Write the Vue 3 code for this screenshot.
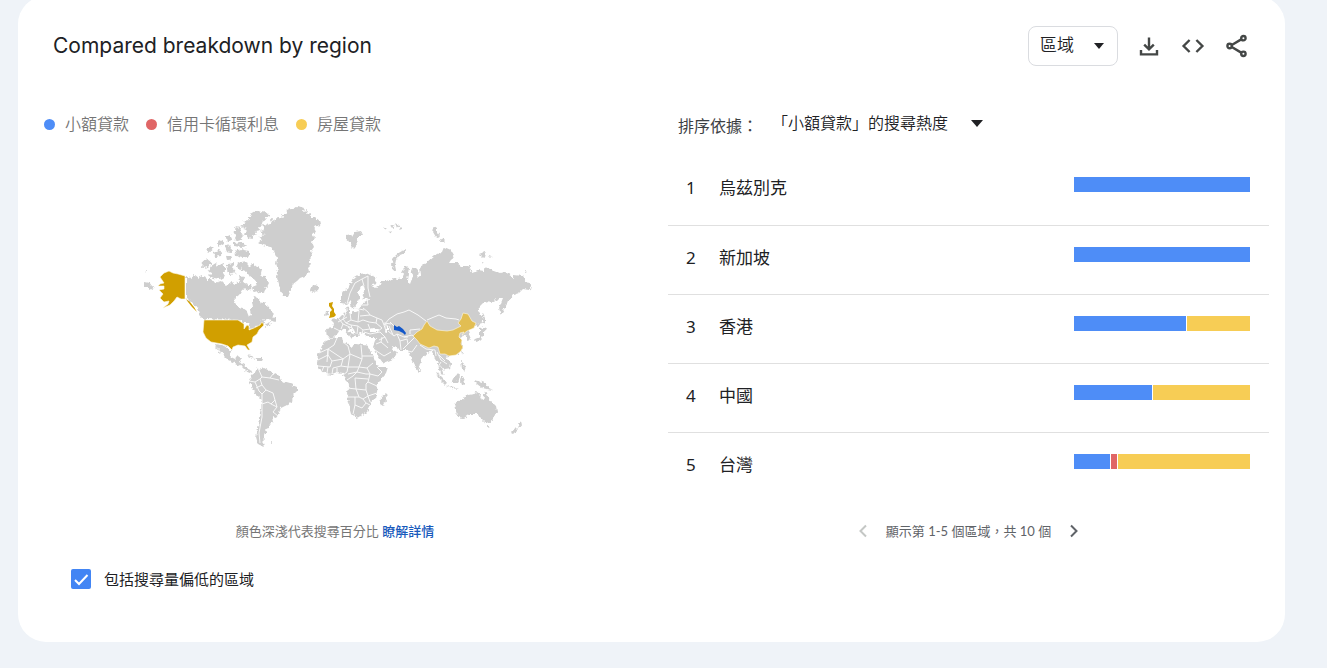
<script setup>
import { ref } from 'vue'

const blue = '#4e8df7'
const red = '#e06666'
const yellow = '#f7cd55'

const terms = [
  { name: '小額貸款', color: blue },
  { name: '信用卡循環利息', color: red },
  { name: '房屋貸款', color: yellow }
]

const regions = [
  { name: '烏茲別克', parts: [{ v: 100, color: blue }] },
  { name: '新加坡', parts: [{ v: 100, color: blue }] },
  { name: '香港', parts: [{ v: 64, color: blue }, { v: 36, color: yellow }] },
  { name: '中國', parts: [{ v: 45, color: blue }, { v: 56, color: yellow }] },
  { name: '台灣', parts: [{ v: 36, color: blue }, { v: 6, color: red }, { v: 132, color: yellow }] }
]

const scope = ref('區域')
const sort = ref('「小額貸款」的搜尋熱度')
const lowVolume = ref(true)

const land = [
  // Greenland
  'M290 208L294 209L298 206L304 208L303 211L308 210L306 214L312 213L310 217L315 217L321 222L318 226L314 227L316 231L312 234L315 238L312 242L314 247L311 251L312 256L309 259L311 264L308 267L309 272L305 276L300 278L297 281L293 284L290 290L288 297L284 297L281 291L279 284L277 277L278 271L276 264L277 258L274 251L270 247L263 245L258 242L263 240L259 237L265 235L260 231L265 230L263 226L270 223L272 219L276 221L278 217L284 218L281 214L288 214L286 210Z',
  // Ellesmere and neighbouring islands
  'M255 211L260 213L264 211L269 215L265 218L268 219L262 222L264 225L258 227L260 231L255 232L256 236L251 235L253 239L247 238L248 234L243 235L247 231L242 230L247 228L241 226L246 223L242 221L249 220L247 217L253 217L250 214Z',
  'M236 227L241 228L240 232L243 236L239 241L235 239L237 235L233 233Z',
  'M226 237L230 235L232 239L227 242Z M218 242L222 240L224 243L219 246Z M206 250L211 246L214 248L208 253Z M213 252L218 250L222 251L221 256L215 257Z M224 247L229 245L232 248L231 253L226 252Z M234 243L240 242L248 245L242 247L234 246Z M226 256L231 255L232 259L227 260Z',
  'M235 251L241 249L249 251L249 256L243 258L236 256Z',
  'M203 261L208 259L212 262L208 267L202 268Z M211 266L216 263L218 266L223 264L226 269L223 273L225 276L220 279L214 278L209 276L212 273L208 271Z M228 264L234 263L233 269L236 273L230 275L227 270Z M238 262L243 264L240 270L236 267Z',
  // Baffin Island
  'M241 263L247 262L249 267L253 263L258 267L262 270L261 274L266 278L269 283L267 287L264 285L266 291L262 294L258 291L254 292L252 287L257 285L255 280L250 277L247 272L242 271Z M245 285L250 285L252 289L246 290Z',
  // Canadian mainland
  'M186 276L190 278L195 275L199 278L203 276L207 279L212 279L215 283L221 281L225 285L229 284L231 281L236 284L240 281L239 276L244 277L243 282L248 284L246 288L242 290L239 295L235 298L234 303L238 307L243 308L247 311L249 316L251 315L250 311L253 307L252 301L254 297L259 299L261 304L265 301L267 306L270 310L274 314L272 318L266 319L260 321L264 321L263 324L257 326L251 330L248 329L249 325L244 323L240 320L203 319L199 315L197 308L192 302L186 298Z M266 324L271 322L270 325L265 327Z M272 317L276 318L276 322L271 321Z',
  // Mexico, Central America and the Caribbean
  'M215 344L222 345L228 348L231 352L231 357L235 359L238 356L241 358L239 362L245 365L247 369L252 371L251 373L246 371L241 366L235 363L228 360L224 356L220 350L217 347L221 354L218 351Z M246 355L252 356L256 359L250 357Z M257 359L262 359L261 361L257 361Z M169 357L170 357L170 358L169 358Z',
  // South America
  'M253 374L257 367L259 370L264 368L270 371L275 374L280 377L283 382L290 384L297 387L297 391L293 395L292 402L287 405L281 408L279 414L276 418L273 417L274 422L269 424L269 428L265 429L267 432L264 435L265 438L262 441L264 447L258 444L256 437L258 429L259 418L261 408L261 399L256 394L252 387L249 382L250 378Z M271 442L273 442L272 444Z',
  // Africa and Madagascar
  'M325 341L330 339L337 337L342 337L343 342L348 344L352 347L356 344L363 345L369 346L371 353L375 361L379 367L388 367L386 373L381 379L378 384L377 391L377 396L371 401L370 406L367 411L362 416L356 418L352 414L349 403L347 394L349 385L345 379L343 374L337 373L332 375L326 374L321 370L317 364L318 354L322 348Z M386 393L387 398L383 406L380 404L381 397Z',
  // Iceland, Ireland and Svalbard
  'M311 287L315 285L320 287L318 291L313 292L310 290Z M326 311L329 311L328 315L325 316Z M346 235L350 234L352 237L355 232L361 231L363 235L357 238L358 243L353 249L351 244L349 240L346 239Z',
  // Arctic archipelagos
  'M383 229L386 227L387 231Z M390 227L393 225L394 228Z M395 223L400 226L397 228Z M388 232L392 231L391 234Z M399 229L402 228L401 231Z M407 250L404 254L399 256L396 260L395 265L396 270L393 270L391 265L393 259L397 254L402 251Z M434 226L437 228L437 232L440 236L436 237L433 232Z M441 238L445 240L443 242L440 242Z M479 254L484 252L487 255L483 258Z M488 256L493 257L490 258Z M483 262L485 262L484 264Z M525 270L527 271L525 272Z M144 282L149 283L152 287L154 288L150 290L147 287L144 287Z M145 270L147 270L146 272Z',
  // Scandinavia, mainland Europe and Asia
  'M341 294L345 289L348 288L351 282L355 277L360 274L366 273L372 276L377 279L376 284L371 285L376 288L381 285L380 281L386 281L393 278L398 279L402 278L404 274L402 270L406 266L409 267L408 274L407 281L410 284L413 276L411 270L415 267L419 271L417 278L421 275L420 267L427 262L434 256L442 252L444 247L451 250L454 255L449 263L457 263L461 266L469 266L472 272L478 270L484 271L484 267L491 270L499 273L507 272L514 278L514 275L523 276L527 282L532 288L529 290L523 289L519 293L513 295L507 304L501 315L499 308L503 298L498 298L494 302L486 301L480 307L478 311L482 315L483 320L478 327L475 325L468 331L471 338L468 341L465 335L459 338L463 347L458 353L450 356L445 357L451 363L450 369L444 370L440 365L444 375L440 374L438 364L435 359L433 351L427 353L421 360L418 371L413 361L408 350L399 350L392 346L391 349L397 352L393 359L383 363L378 356L373 346L376 338L369 338L363 333L359 332L360 337L356 337L352 329L348 328L349 332L355 335L352 339L345 330L340 329L338 333L333 338L327 337L326 329L333 328L334 323L331 320L338 319L343 314L347 313L346 307L350 309L350 313L359 311L362 304L366 301L370 298L364 299L362 295L365 290L364 286L361 287L358 293L360 298L356 306L352 308L350 300L346 304L341 303Z',
  // Sumatra, Java, Borneo, Sulawesi and the Philippines
  'M436 373L440 375L446 381L445 385L440 380Z M447 386L454 387L458 389L451 388Z M451 380L455 377L458 373L460 377L457 383L452 383Z M461 377L464 377L463 380L465 385L461 384L460 381Z M461 361L464 362L463 366L466 368L465 372L462 368Z M473 380L479 381L485 383L489 388L493 390L487 389L482 388L477 384Z',
  // Japan, Sri Lanka and Taiwan
  'M483 314L485 318L485 324L483 321Z M480 329L485 327L487 330L483 332L483 337L480 340L474 342L475 339L480 337Z M419 368L421 371L419 373Z M461 351L463 352L462 355Z',
  // Australia, Tasmania and New Zealand
  'M455 403L460 400L464 399L468 394L474 393L477 392L480 394L479 398L483 400L485 391L488 397L491 401L496 406L497 411L494 418L490 423L485 422L482 419L477 414L470 414L464 418L457 417L456 411Z M488 426L491 426L489 430Z M520 421L523 423L519 428L518 425Z M516 427L518 429L513 434L511 433Z'
]

const borders = [
  // South America
  'M249 381L255 382L260 379L262 385L266 390L273 393L275 400L271 404L268 402L262 404L262 394M255 382L259 391L262 394M258 368L262 377L270 378L273 374M270 378L279 380M262 377L260 379M262 385L256 388M275 400L277 407L273 412L278 416M262 404L262 417L259 433L260 443M266 390L262 394M271 404L277 407',
  // Africa
  'M337 338L334 345L328 349L319 353M328 349L328 355L318 360M328 349L343 359L350 354L348 346L343 342M361 345L362 356L373 356M350 354L362 359L362 356M318 366L330 367L332 361L328 355M332 361L343 359L341 366L333 368L332 374M341 366L348 367L347 372L343 375M350 354L348 367M362 359L359 367L367 368L373 363M348 367L359 367L357 372L348 374M367 368L370 374L378 376L382 372L377 367M357 372L366 374L370 374L368 382L377 386M347 380L353 376L357 372M347 388L356 389L355 378L368 379M356 389L366 390L366 384L368 382M347 397L359 397L356 389M366 390L368 396L377 393M359 397L363 399L368 396L370 402M353 414L355 405L362 408L366 403L370 405M355 397L355 405M363 399L366 403M322 371L324 366M327 373L328 367M337 373L337 368M327 362L328 349',
  // Europe
  'M347 304L350 293L355 283L362 279L364 286M362 279L368 276L368 288L370 297M334 328L340 331M339 319L343 324L341 329M346 313L343 319L346 323L351 325L358 326M350 313L351 320L346 323M351 320L358 322L359 311M358 322L363 320L369 322L376 323L377 318L370 315L360 316M363 308L368 312L370 315M360 305L368 305L367 299M351 325L353 331M358 326L357 334M358 326L363 330L370 329L368 324M363 330L362 334M343 324L352 328M347 317L338 322M376 323L382 328L377 332M354 308L364 310',
  // Western and central Asia
  'M364 332L370 334L380 332L385 337L379 340M385 337L388 343M388 331L394 336L397 334L404 337L408 337M382 337L381 342L376 344M381 342L388 348M375 350L384 356L391 352M397 334L400 341L401 350M400 341L407 339L408 344L403 349M408 344L415 337M404 337L412 335L415 337M386 331L384 325L389 319L397 314L404 312L409 310L418 315L426 321M390 322L395 327M389 326L393 335M427 320L434 317L439 315L446 318L456 319L459 320M410 334L410 330L420 329M420 345L426 349L435 350L436 356M417 345L412 352L408 351M437 352L441 360L447 364M439 355L445 361M441 362L438 367M384 323L391 324M377 318L382 320L384 325'
]

const lakes = 'M385 323L388 326L388 333L385 332L386 328ZM244 323L248 323L250 326L247 326L247 329L245 329ZM369 329L374 328L380 330L377 332L369 332Z'
const usa = 'M204 320L238 320L244 324L244 329L247 325L249 326L249 330L254 328L260 325L262 322L264 325L259 330L257 334L253 337L252 342L247 345L250 350L248 350L245 346L238 345L233 347L232 350L228 346L222 344L211 342L206 338L203 332Z'
const alaska = 'M160 277L164 273L169 271L173 273L178 274L185 276L185 299L181 299L177 297L174 301L170 305L163 308L168 304L169 301L164 302L160 298L163 294L159 290L164 289L164 286L158 286L160 284L164 283L162 280Z'
const panhandle = 'M186 299L190 302L194 307L197 312L192 307L188 302Z'
const china = 'M413 336L417 332L422 329L424 325L427 321L430 326L437 330L447 331L453 330L461 326L458 323L461 319L463 313L468 314L472 321L476 323L474 328L467 331L462 335L464 332L460 333L459 337L462 340L461 344L463 347L461 351L456 355L449 356L445 354L440 354L438 347L434 346L429 348L420 344L417 340Z'
const britain = 'M329 303L333 302L332 306L334 309L334 312L336 315L334 317L329 318L330 315L330 312L332 310L329 306Z'
const uzbek = 'M394 325L397 327L399 326L403 329L406 333L405 335L403 333L399 331L394 330Z'
</script>

<template>
  <main class="card">
    <header class="head">
      <h1>Compared breakdown by region</h1>
      <div class="tools">
        <label class="picker boxed">
          <select v-model="scope" aria-label="區域">
            <option>區域</option>
          </select>
          <svg class="caret" width="10" height="6" viewBox="0 0 10 6" aria-hidden="true"><path d="M0 0H10L5 6Z" /></svg>
        </label>
        <button type="button" class="icon" aria-label="CSV">
          <svg width="24" height="24" viewBox="0 0 24 24"><path d="M12 3.5V15M7.2 10.6L12 15.4L16.8 10.6M4 16V20.4H20V16" /></svg>
        </button>
        <button type="button" class="icon" aria-label="Embed">
          <svg width="24" height="24" viewBox="0 0 24 24"><path d="M8.6 6L2.6 12L8.6 18M15.4 6L21.4 12L15.4 18" /></svg>
        </button>
        <button type="button" class="icon" aria-label="Share">
          <svg width="24" height="24" viewBox="0 0 24 24"><path d="M6.8 11L16.2 5.4M6.8 13L16.2 18.6" /><circle cx="4.6" cy="12" r="2.2" /><circle cx="18.4" cy="4.2" r="2.2" /><circle cx="18.4" cy="19.8" r="2.2" /></svg>
        </button>
      </div>
    </header>

    <div class="columns">
      <section class="left">
        <ul class="legend">
          <li v-for="t in terms" :key="t.name"><i :style="{ background: t.color }"></i>{{ t.name }}</li>
        </ul>
        <svg class="map" viewBox="135 200 400 250" role="img" aria-label="世界地圖">
          <defs>
            <filter id="coast" x="0" y="0" width="1" height="1">
              <feTurbulence type="fractalNoise" baseFrequency="0.28" numOctaves="2" seed="4" />
              <feDisplacementMap in="SourceGraphic" scale="5" xChannelSelector="R" yChannelSelector="G" />
            </filter>
          </defs>
          <g filter="url(#coast)">
            <path v-for="(d, i) in land" :key="'l' + i" class="land" :d="d" />
            <path class="water" :d="lakes" />
          </g>
          <path v-for="(d, i) in borders" :key="'b' + i" class="border" :d="d" />
          <path class="usa" :d="usa" />
          <path class="usa" :d="alaska" />
          <path class="islets" :d="panhandle" />
          <path class="islets" :d="britain" />
          <path class="china" :d="china" />
          <path class="uzbek" :d="uzbek" />
        </svg>
        <p class="caption">顏色深淺代表搜尋百分比 <a href="#">瞭解詳情</a></p>
        <label class="check">
          <input v-model="lowVolume" type="checkbox" />
          <svg width="20" height="20" viewBox="0 0 20 20" aria-hidden="true"><path d="M4 11L8 15L16.5 6" /></svg>
          <span>包括搜尋量偏低的區域</span>
        </label>
      </section>

      <section class="right">
        <div class="sort">
          <label for="sort">排序依據：</label>
          <div class="picker">
            <select id="sort" v-model="sort">
              <option>「小額貸款」的搜尋熱度</option>
            </select>
            <svg class="caret" width="12" height="7" viewBox="0 0 12 7" aria-hidden="true"><path d="M0 0H12L6 7Z" /></svg>
          </div>
        </div>
        <table>
          <tbody>
            <tr v-for="(r, i) in regions" :key="r.name">
              <td class="rank">{{ i + 1 }}</td>
              <td class="name">{{ r.name }}</td>
              <td class="share">
                <div class="bar">
                  <span v-for="(p, k) in r.parts" :key="k" :style="{ flexGrow: p.v, background: p.color }"></span>
                </div>
              </td>
            </tr>
          </tbody>
        </table>
        <nav class="pager">
          <button type="button" disabled aria-label="上一頁">
            <svg width="10" height="14" viewBox="0 0 10 14"><path d="M8 1.5L2.5 7L8 12.5" /></svg>
          </button>
          <span>顯示第 1-5 個區域，共 10 個</span>
          <button type="button" aria-label="下一頁">
            <svg width="10" height="14" viewBox="0 0 10 14"><path d="M2 1.5L7.5 7L2 12.5" /></svg>
          </button>
        </nav>
      </section>
    </div>
  </main>
</template>

<style>
body {
  margin: 0;
  background: #eff3f8;
  overflow: hidden;
}
</style>

<style scoped>
.card {
  box-sizing: border-box;
  margin: -4px 42px 25px 18px;
  padding: 4px 16px 52px 0;
  background: #fff;
  border-radius: 28px;
  font-family: Lato, "Noto Sans CJK TC", sans-serif;
  color: #202124;
}
.head {
  display: flex;
  align-items: center;
  justify-content: space-between;
  height: 92px;
  padding: 0 20px 0 35px;
}
h1 {
  margin: 0;
  font-family: Inter, sans-serif;
  font-size: 21px;
  font-weight: 400;
  line-height: 28px;
}
.tools {
  display: flex;
  align-items: center;
}
button {
  padding: 0;
  border: 0;
  background: none;
  cursor: pointer;
}
.icon {
  display: grid;
  place-items: center;
  width: 24px;
  height: 24px;
  margin-left: 20px;
}
.icon:first-of-type {
  margin-left: 19px;
}
.icon svg {
  fill: none;
  stroke: #444746;
  stroke-width: 2.4;
}
.picker {
  display: grid;
  align-items: center;
}
.picker > * {
  grid-area: 1 / 1;
}
.picker select {
  appearance: none;
  border: 0;
  background: none;
  color: #202124;
  font-family: inherit;
  font-size: 17px;
  font-weight: 350;
  line-height: 24px;
}
.caret {
  justify-self: end;
  fill: #202124;
  pointer-events: none;
}
.boxed {
  box-sizing: border-box;
  width: 90px;
  height: 40px;
  border: 1px solid #dadce0;
  border-radius: 8px;
}
.boxed select {
  width: 100%;
  height: 38px;
  padding: 0 0 3px 11px;
}
.boxed .caret {
  margin-right: 13px;
}
.columns {
  display: grid;
  grid-template-columns: 634fr 601fr;
  column-gap: 16px;
}
.left {
  display: flex;
  flex-direction: column;
}
.legend {
  display: flex;
  gap: 17px;
  margin: 19px 0 0;
  padding: 0 0 0 26px;
  list-style: none;
  color: #757575;
  font-size: 16px;
  font-weight: 350;
  line-height: 26px;
}
.legend li {
  display: flex;
  align-items: center;
}
.legend i {
  width: 11px;
  height: 11px;
  margin-right: 10px;
  border-radius: 50%;
}
.map {
  align-self: center;
  width: 400px;
  max-width: 100%;
  margin-top: 63px;
}
.land {
  fill: #cecece;
}
.water {
  fill: #fff;
}
.border {
  fill: none;
  stroke: #f8f8f8;
  stroke-width: 1;
}
.usa,
.china {
  stroke: #fdf8e4;
  stroke-width: 0.6;
}
.usa,
.islets {
  fill: #d19f00;
}
.china {
  fill: #e2be53;
}
.uzbek {
  fill: #1257c9;
}
.caption {
  margin: 71px 0 0;
  text-align: center;
  color: #757575;
  font-size: 13px;
  line-height: 20px;
}
a {
  color: #185abc;
  font-weight: 500;
  text-decoration: none;
}
.check {
  display: grid;
  grid-template-columns: 20px auto;
  column-gap: 13px;
  align-items: center;
  align-self: flex-start;
  margin: 27px 0 0 53px;
  font-size: 15px;
  line-height: 22px;
}
.check input {
  grid-area: 1 / 1;
  appearance: none;
  width: 20px;
  height: 20px;
  margin: 0;
  border-radius: 2px;
  background: #4285f4;
}
.check svg {
  grid-area: 1 / 1;
  fill: none;
  stroke: #fff;
  stroke-width: 2;
  pointer-events: none;
}
.sort {
  display: flex;
  align-items: flex-start;
  height: 48px;
  padding: 16px 0 0 10px;
}
.sort > label {
  padding-top: 6px;
  color: #3c4043;
  font-size: 16px;
  line-height: 24px;
}
.sort .picker {
  margin-left: 14px;
}
.sort select {
  height: 30px;
  padding: 0 34px 0 0;
  font-size: 16px;
}
table {
  width: 100%;
  border-collapse: collapse;
}
tr + tr {
  border-top: 1px solid #e0e0e0;
}
td {
  height: 69px;
  box-sizing: border-box;
  padding: 0;
  vertical-align: top;
  font-size: 17px;
  line-height: 24px;
}
.rank {
  width: 51px;
  padding: 20px 0 0 18px;
  font-family: "Noto Sans", sans-serif;
}
.name {
  padding-top: 20px;
}
.share {
  width: 195px;
  padding: 21px 19px 0 0;
}
.bar {
  display: flex;
  gap: 1px;
  height: 15px;
}
.bar span {
  flex-basis: 0;
}
.pager {
  display: flex;
  align-items: center;
  justify-content: center;
  gap: 18px;
  margin-top: 20px;
  color: #5f6368;
  font-size: 13px;
  line-height: 20px;
}
.pager button {
  display: grid;
}
.pager svg {
  fill: none;
  stroke: #5f6368;
  stroke-width: 2;
}
.pager button:disabled svg {
  stroke: #c4c7c5;
}
</style>
